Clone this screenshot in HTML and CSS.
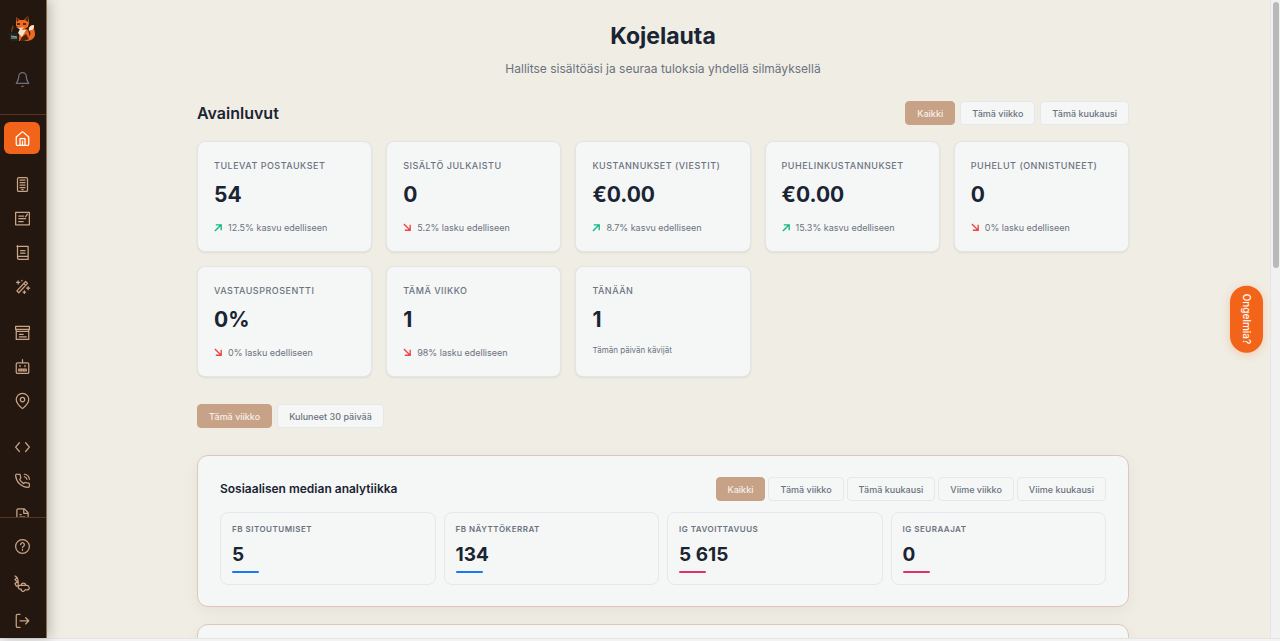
FILE: index.html
```html
<!DOCTYPE html>
<html lang="fi">
<head>
    <meta charset="UTF-8">
    <meta name="viewport" content="width=device-width, initial-scale=1.0">
    <title>Kojelauta</title>
    <link rel="stylesheet" href="styles.css">
</head>
<body>
    <div class="app">
        <aside class="sidebar">
            <div class="sidebar-top">
                <a href="#" class="logo" aria-label="Etusivu">
                    <svg viewBox="0 0 28 28" width="28" height="28">
                        <path d="M16 24c6 2 11-1 11-6 0-4-2-6-1-9-5 0-6 4-4 7 1 3 0 5-6 5z" fill="#ee6a1f"/>
                        <path d="M26 9c-4 0-6 3-5 6 2-2 3 0 4-2 1-1 1-2 1-4z" fill="#f6e3cf"/>
                        <path d="M12 13h7c3 4 3 8 1 12h-9c0-5 0-9 1-12z" fill="#e8641c"/>
                        <path d="M12 13l6 1-4 7-4-4z" fill="#f6e3cf"/>
                        <path d="M8 1l4 3h4l4-4 1 7-1 4-5 3-7-4z" fill="#ee6a1f"/>
                        <path d="M8 1l3 3-2 2zM20 0l-3 4 3 2z" fill="#4a2412"/>
                        <path d="M8 11l4 1 4-1-3 3z" fill="#f6e3cf"/>
                        <path d="M9 8h3M15 8h3" stroke="#2a1710" stroke-width="1.4"/>
                        <path d="M4 10c3 2-2 3 0 6" stroke="#70401f" stroke-width="1.5" fill="none"/>
                        <path d="M1 17h9l1 8H2z" fill="#1d2721"/>
                        <path d="M3 20l6 1M3 22l6 0" stroke="#a9b0a4"/>
                        <path d="M14 21l4-3 3 5-5 2-4 0z" fill="#4a2412"/>
                    </svg>
                </a>
                <button class="bell" aria-label="Ilmoitukset">
                    <svg class="icon" viewBox="0 0 24 24"><path d="M6 7a6 6 0 0 1 12 0c0 6 2 8 4 11H2c2-3 4-5 4-11M11 23h2"/></svg>
                </button>
            </div>

            <nav class="sidebar-nav">
                <div class="nav-group">
                    <a href="#" class="nav-item active" aria-label="Kojelauta">
                        <svg class="icon" viewBox="0 0 24 24"><path d="M2 9.500L12 1l10 8.500V21a2 2 0 0 1-2 2H4a2 2 0 0 1-2-2zM8 23V12h8v11M12 16v7"/></svg>
                    </a>
                </div>
                <div class="nav-group">
                    <a href="#" class="nav-item" aria-label="Lomakkeet">
                        <svg class="icon" viewBox="0 0 24 24"><rect x="4" y="1" width="16" height="22" rx="2"/><path d="M8 5h8M8 9h8M8 13h8M8 17h8M11 20h2"/></svg>
                    </a>
                    <a href="#" class="nav-item" aria-label="Julkaisut">
                        <svg class="icon" viewBox="0 0 24 24"><path d="M1 2h22v20H1zM6 8h8M6 12h11M6 17h7M17 9l3-4"/></svg>
                    </a>
                    <a href="#" class="nav-item" aria-label="Kirjasto">
                        <svg class="icon" viewBox="0 0 24 24"><path d="M4 1v19a3 3 0 0 0 3 3h14V2H3M4 18h17M9 9h7M9 13h7"/></svg>
                    </a>
                    <a href="#" class="nav-item" aria-label="Luo sisältöä">
                        <svg class="icon" viewBox="0 0 24 24"><path d="M3 19L17 4l3 3L6 22zM14 7l3 3M5 3v5M2.500 5.500h5M21 12v5M18.500 14.500h5M15 19v4M13 21h4M11 2v1"/></svg>
                    </a>
                </div>
                <div class="nav-group">
                    <a href="#" class="nav-item" aria-label="Arkisto">
                        <svg class="icon" viewBox="0 0 24 24"><path d="M1 2h22v5H1zM2 10h20v13H2zM7 15h6M7 19h11M2 7v3M22 7v3"/></svg>
                    </a>
                    <a href="#" class="nav-item" aria-label="Botti">
                        <svg class="icon" viewBox="0 0 24 24"><rect x="2" y="6" width="20" height="17" rx="2"/><path d="M12 1v5M8 10v2M16 10v2M6 16h12v3H6zM10 16v3M14 16v3"/></svg>
                    </a>
                    <a href="#" class="nav-item" aria-label="Sijainnit">
                        <svg class="icon" viewBox="0 0 24 24"><path d="M22 10.500C22 17 12 25 12 25S2 17 2 10.500a10 10 0 0 1 20 0z"/><circle cx="12" cy="10.500" r="3.500"/></svg>
                    </a>
                </div>
                <div class="nav-group">
                    <a href="#" class="nav-item" aria-label="Koodi">
                        <svg class="icon" viewBox="0 0 24 24"><path d="M7 6l-6 7 6 7M17 6l6 7-6 7"/></svg>
                    </a>
                    <a href="#" class="nav-item" aria-label="Puhelut">
                        <svg class="icon" viewBox="0 0 24 24"><path d="M15 6a5 5 0 0 1 4 4M15 2a9 9 0 0 1 8 8M23 18v3a2 2 0 0 1-2.200 2A20.500 20.500 0 0 1 1 4.200 2 2 0 0 1 3 2h3.500a2 2 0 0 1 2 1.700c.2 1 .4 1.900.7 2.800a2 2 0 0 1-.4 2.100L7.500 10.500a16 16 0 0 0 6.500 6.500l1.400-1.300a2 2 0 0 1 2.100-.4c.9.300 1.800.500 2.800.700A2 2 0 0 1 23 18z"/></svg>
                    </a>
                    <a href="#" class="nav-item" aria-label="Raportit">
                        <svg class="icon" viewBox="0 0 24 24"><path d="M3 24V5a2 2 0 0 1 2-2h10l6 6v15zM14 3v7h7M8 12h2M8 16h8M8 20h8"/></svg>
                    </a>
                </div>
            </nav>

            <div class="sidebar-footer">
                <a href="#" class="nav-item" aria-label="Ohje">
                    <svg class="icon" viewBox="0 0 24 24"><circle cx="12" cy="12" r="11"/><path d="M9 9a3 3 0 1 1 4.500 2.600c-1 .6-1.500 1.200-1.500 2.400M12 17v1"/></svg>
                </a>
                <a href="#" class="nav-item" aria-label="Asetukset">
                    <svg class="icon" viewBox="0 0 24 24"><path d="M0 0l3 2-3 4 4 3-4 3 2 4h4M3 2l2 5v8"/><path d="M6 16a3 3 0 0 0 2 5h2a3 3 0 0 0 6 1h3a3 3 0 0 0 3-5 3 3 0 0 0-3-2H7"/><path d="M10 15a3.500 3.500 0 1 1 7 0"/></svg>
                </a>
                <button class="nav-item" aria-label="Kirjaudu ulos">
                    <svg class="icon" viewBox="0 0 24 24"><path d="M8 2H4a2 2 0 0 0-2 2v17a2 2 0 0 0 2 2h4M8 12.500h14M17 7.500l5 5-5 5"/></svg>
                </button>
            </div>
        </aside>

        <main class="main">
            <div class="container">
                <header class="page-header">
                    <h1>Kojelauta</h1>
                    <p>Hallitse sisältöäsi ja seuraa tuloksia yhdellä silmäyksellä</p>
                </header>

                <section>
                    <div class="section-header">
                        <h2>Avainluvut</h2>
                        <div class="filters">
                            <button class="btn active">Kaikki</button>
                            <button class="btn">Tämä viikko</button>
                            <button class="btn">Tämä kuukausi</button>
                        </div>
                    </div>

                    <div class="cards">
                        <div class="card">
                            <div class="card-label">Tulevat postaukset</div>
                            <div class="card-value">54</div>
                            <div class="trend"><svg class="arrow up" viewBox="0 0 10 10"><path d="M1 9l7-7M2 2h6v6"/></svg>12.5% kasvu edelliseen</div>
                        </div>
                        <div class="card">
                            <div class="card-label">Sisältö julkaistu</div>
                            <div class="card-value">0</div>
                            <div class="trend"><svg class="arrow down" viewBox="0 0 10 10"><path d="M1 1l7 7M8 2v6H2"/></svg>5.2% lasku edelliseen</div>
                        </div>
                        <div class="card">
                            <div class="card-label">Kustannukset (viestit)</div>
                            <div class="card-value">€0.00</div>
                            <div class="trend"><svg class="arrow up" viewBox="0 0 10 10"><path d="M1 9l7-7M2 2h6v6"/></svg>8.7% kasvu edelliseen</div>
                        </div>
                        <div class="card">
                            <div class="card-label">Puhelinkustannukset</div>
                            <div class="card-value">€0.00</div>
                            <div class="trend"><svg class="arrow up" viewBox="0 0 10 10"><path d="M1 9l7-7M2 2h6v6"/></svg>15.3% kasvu edelliseen</div>
                        </div>
                        <div class="card">
                            <div class="card-label">Puhelut (onnistuneet)</div>
                            <div class="card-value">0</div>
                            <div class="trend"><svg class="arrow down" viewBox="0 0 10 10"><path d="M1 1l7 7M8 2v6H2"/></svg>0% lasku edelliseen</div>
                        </div>
                        <div class="card">
                            <div class="card-label">Vastausprosentti</div>
                            <div class="card-value">0%</div>
                            <div class="trend"><svg class="arrow down" viewBox="0 0 10 10"><path d="M1 1l7 7M8 2v6H2"/></svg>0% lasku edelliseen</div>
                        </div>
                        <div class="card">
                            <div class="card-label">Tämä viikko</div>
                            <div class="card-value">1</div>
                            <div class="trend"><svg class="arrow down" viewBox="0 0 10 10"><path d="M1 1l7 7M8 2v6H2"/></svg>98% lasku edelliseen</div>
                        </div>
                        <div class="card">
                            <div class="card-label">Tänään</div>
                            <div class="card-value">1</div>
                            <div class="card-note">Tämän päivän kävijät</div>
                        </div>
                    </div>
                </section>

                <div class="filters period">
                    <button class="btn active">Tämä viikko</button>
                    <button class="btn">Kuluneet 30 päivää</button>
                </div>

                <section class="panel">
                    <div class="panel-header">
                        <h3>Sosiaalisen median analytiikka</h3>
                        <div class="filters tight">
                            <button class="btn active">Kaikki</button>
                            <button class="btn">Tämä viikko</button>
                            <button class="btn">Tämä kuukausi</button>
                            <button class="btn">Viime viikko</button>
                            <button class="btn">Viime kuukausi</button>
                        </div>
                    </div>
                    <div class="stats">
                        <div class="stat facebook">
                            <div class="stat-label">FB sitoutumiset</div>
                            <div class="stat-value">5</div>
                        </div>
                        <div class="stat facebook">
                            <div class="stat-label">FB näyttökerrat</div>
                            <div class="stat-value">134</div>
                        </div>
                        <div class="stat instagram">
                            <div class="stat-label">IG tavoittavuus</div>
                            <div class="stat-value">5&nbsp;615</div>
                        </div>
                        <div class="stat instagram">
                            <div class="stat-label">IG seuraajat</div>
                            <div class="stat-value">0</div>
                        </div>
                    </div>
                </section>

                <section class="panel"></section>
            </div>
        </main>

        <div class="scroll-track"><div class="scroll-thumb"></div></div>

        <button class="help-tab">Ongelmia?</button>
    </div>
    <div class="bottom-edge"></div>
</body>
</html>
```

FILE: styles.css
```css
* {
    margin: 0;
    padding: 0;
    box-sizing: border-box;
}
body {
    font-family: Inter, sans-serif;
    background-color: #f0ede4;
    color: #1a2433;
    height: 100vh;
    display: flex;
    flex-direction: column;
    overflow: hidden;
}
button {
    font-family: inherit;
    border: none;
    background: none;
    cursor: pointer;
}
.app {
    position: relative;
    flex: 1;
    min-height: 0;
    display: flex;
}
.bottom-edge {
    height: 3px;
    background-color: #f3f3f3;
    border-top: 1px solid #e4e4e4;
}

/* Sidebar */
.sidebar {
    width: 47px;
    flex-shrink: 0;
    display: flex;
    flex-direction: column;
    background-color: #23170f;
    border-right: 1px solid #8a6a52;
    box-shadow: 2px 0 12px rgba(0, 0, 0, 0.25);
}
.sidebar-top {
    height: 115px;
    flex-shrink: 0;
    padding: 16px 2px 0 0;
    display: flex;
    flex-direction: column;
    align-items: center;
    gap: 19px;
    border-bottom: 1px solid #573620;
}
.logo {
    height: 28px;
}
.bell {
    width: 32px;
    height: 32px;
    display: flex;
    align-items: center;
    justify-content: center;
    color: #6b7280;
}
.sidebar-nav {
    flex: 1;
    min-height: 0;
    overflow: hidden;
    padding: 7px 4px 0;
    display: flex;
    flex-direction: column;
    gap: 14px;
}
.nav-group {
    display: flex;
    flex-direction: column;
    gap: 2px;
}
.nav-item {
    width: 36px;
    height: 32px;
    flex-shrink: 0;
    display: flex;
    align-items: center;
    justify-content: center;
    color: #c9a487;
    border-radius: 6px;
}
.nav-item.active {
    background-color: #f26419;
    color: #ffffff;
}
.sidebar-footer {
    border-top: 1px solid #573620;
    padding: 12px 4px 2px;
    display: flex;
    flex-direction: column;
    gap: 5px;
}
.icon {
    width: 15px;
    height: 15px;
    fill: none;
    stroke: currentColor;
    stroke-width: 2;
    stroke-linecap: round;
    stroke-linejoin: round;
    overflow: visible;
}

/* Content */
.main {
    flex: 1;
    min-width: 0;
    overflow: hidden;
    padding: 0 24px 0 33px;
}
.container {
    max-width: 932px;
    margin: 0 auto;
}
.page-header {
    text-align: center;
    padding-top: 20px;
}
.page-header h1 {
    font-size: 23px;
    line-height: 32px;
    font-weight: 700;
}
.page-header p {
    margin-top: 8px;
    font-size: 12px;
    line-height: 18px;
    color: #6b7280;
}
.section-header {
    margin-top: 23px;
    display: flex;
    align-items: center;
    justify-content: space-between;
}
h2 {
    font-size: 16px;
    line-height: 24px;
    font-weight: 600;
}
h3 {
    font-size: 12px;
    line-height: 24px;
    font-weight: 600;
}
.filters {
    display: flex;
    gap: 5px;
}
.filters.tight {
    gap: 3px;
}
.filters.period {
    margin: 27px 0;
}
.btn {
    height: 24px;
    padding: 0 11px;
    font-size: 9px;
    font-weight: 500;
    color: #6b7280;
    background-color: #f5f7f6;
    border: 1px solid #e5e7eb;
    border-radius: 4px;
}
.btn.active {
    color: #f5f0ea;
    background-color: #c8a287;
    border-color: #c8a287;
}

.cards {
    margin-top: 16px;
    display: grid;
    grid-template-columns: repeat(5, 1fr);
    gap: 14px;
}
.card {
    height: 111px;
    padding: 16px;
    background-color: #f5f7f6;
    border: 1px solid #e2e4e8;
    border-radius: 8px;
    box-shadow: 0 1px 2px rgba(0, 0, 0, 0.08);
}
.card-label {
    font-size: 9px;
    line-height: 15px;
    font-weight: 500;
    letter-spacing: 0.5px;
    text-transform: uppercase;
    white-space: nowrap;
    color: #6b7280;
}
.card-value {
    margin-top: 8px;
    font-size: 21px;
    line-height: 28px;
    font-weight: 700;
}
.trend {
    margin-top: 11px;
    display: flex;
    align-items: center;
    gap: 5px;
    font-size: 9px;
    line-height: 15px;
    color: #6b7280;
}
.arrow {
    width: 9px;
    height: 9px;
    fill: none;
    stroke-width: 1.5;
}
.arrow.up {
    stroke: #10b981;
}
.arrow.down {
    stroke: #ef4444;
}
.card-note {
    margin-top: 10px;
    font-size: 8px;
    line-height: 12px;
    color: #6b7280;
}

.panel {
    min-height: 100px;
    margin-bottom: 17px;
    padding: 21px 22px;
    background-color: #f5f7f6;
    border: 1px solid #dfc6b7;
    border-radius: 11px;
    box-shadow: 0 4px 16px rgba(0, 0, 0, 0.05);
}
.panel-header {
    display: flex;
    align-items: center;
    justify-content: space-between;
}
.stats {
    margin-top: 11px;
    display: grid;
    grid-template-columns: repeat(4, 1fr);
    gap: 8px;
}
.stat {
    padding: 11px;
    border: 1px solid #e5e7eb;
    border-radius: 8px;
}
.stat-label {
    font-size: 8px;
    line-height: 11px;
    font-weight: 600;
    letter-spacing: 0.5px;
    text-transform: uppercase;
    color: #6b7280;
}
.stat-value {
    margin-top: 8px;
    font-size: 19px;
    line-height: 24px;
    font-weight: 700;
}
.stat::after {
    content: "";
    display: block;
    width: 27px;
    height: 2px;
    margin-top: 4px;
    border-radius: 1px;
}
.stat.facebook::after {
    background-color: #1877f2;
}
.stat.instagram::after {
    background-color: #e1306c;
}

/* Scrollbar and help tab */
.scroll-track {
    width: 10px;
    flex-shrink: 0;
    padding: 2px 1px;
    background-color: #f1f1f1;
    border-left: 1px solid #e6e6e6;
}
.scroll-thumb {
    width: 6px;
    height: 42%;
    margin: 0 auto;
    border-radius: 3px;
    background-color: #b9b9b9;
}
.help-tab {
    position: absolute;
    right: 17px;
    top: 50%;
    transform: translateY(-50%);
    padding: 8px 10px;
    writing-mode: vertical-rl;
    font-size: 10px;
    line-height: 13px;
    font-weight: 500;
    color: #ffffff;
    background-color: #f26419;
    border-radius: 17px;
    box-shadow: 0 2px 8px rgba(242, 100, 25, 0.25);
}
```
